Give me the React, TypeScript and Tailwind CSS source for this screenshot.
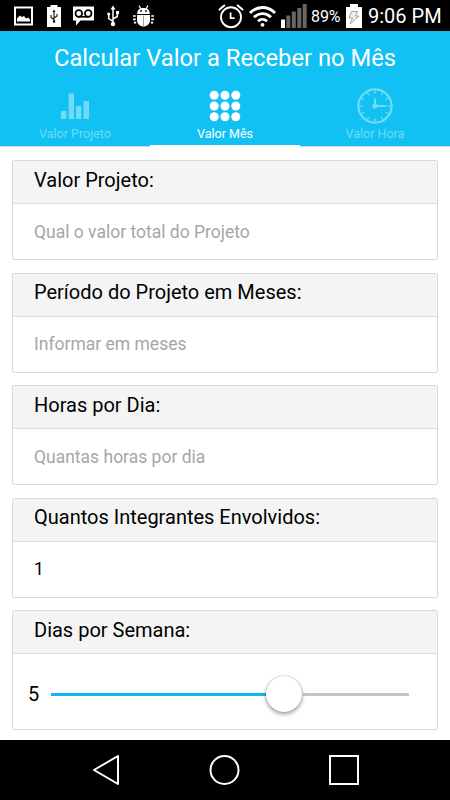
import { useState } from 'react';
import type { ReactNode } from 'react';

const FONT = "font-['Roboto','Noto_Sans',sans-serif]";

function StatusBar() {
  return (
    <div className="flex h-[31px] items-center bg-black pl-[14px] pr-[8px] text-white">
      <svg className="mr-[14px] h-[22px] w-[19px]" viewBox="0 0 19 22" fill="none">
        <rect x="1" y="2.5" width="17" height="17" stroke="#fff" strokeWidth="2" />
        <path d="M3 16.5v-3l3-3 2 1.5 2-1 2 2.5 2-1 2 2v2z" fill="#fff" />
      </svg>
      <svg className="mr-[12px] h-[22px] w-[14px]" viewBox="0 0 14 22" fill="none">
        <path d="M3.5 0h7v2H14v20H0V2h3.5z" fill="#fff" />
        <path d="M7 6v11M7 14.5L4 12.5V10M7 13l3-2V9" stroke="#111" strokeWidth="1.1" />
        <circle cx="7" cy="16.5" r="1.3" fill="#111" />
        <path d="M5.5 7L7 4.5 8.5 7z" fill="#111" />
      </svg>
      <svg className="mr-[13px] h-[22px] w-[21px]" viewBox="0 0 21 22" fill="none">
        <path d="M0 1.5h21v14H7.5L3 20.5v-5H0z" fill="#fff" />
        <circle cx="5.8" cy="8.5" r="3.3" stroke="#000" strokeWidth="1.8" />
        <circle cx="15.2" cy="8.5" r="3.3" stroke="#000" strokeWidth="1.8" />
        <path d="M5.8 11.8h9.4" stroke="#000" strokeWidth="1.6" />
      </svg>
      <svg className="mr-[14px] h-[22px] w-[12px]" viewBox="0 0 12 22" fill="none">
        <path d="M6 3v16M6 16.5L1.7 13.5V9.5M6 14l4.3-2.5V8" stroke="#fff" strokeWidth="1.5" />
        <path d="M3.5 4.5L6 .5l2.5 4z" fill="#fff" />
        <circle cx="1.7" cy="9" r="1.6" fill="#fff" />
        <rect x="9" y="6" width="3" height="3.2" fill="#fff" />
        <circle cx="6" cy="19" r="2.2" fill="#fff" />
      </svg>
      <svg className="h-[22px] w-[21px]" viewBox="0 0 21 22" fill="none">
        <path d="M4.2 9C4.200 5 6.500 3 10.500 3s6.300 2 6.300 6z" fill="#fff" />
        <path d="M6 .5l2 3.500M15 .5l-2 3.500" stroke="#fff" strokeWidth="1.300" />
        <circle cx="8" cy="6" r=".9" fill="#000" />
        <circle cx="13" cy="6" r=".9" fill="#000" />
        <path d="M4 10h13v5c0 4-3 6.500-6.500 6.500S4 19 4 15z" fill="#fff" />
        <path d="M10.500 10.500v11" stroke="#888" strokeWidth=".8" />
        <path d="M0 11h2.800M18.200 11H21M0 14.300h2.800M18.200 14.300H21M.8 17.600h2.400M17.800 17.600h2.400" stroke="#fff" strokeWidth="1.700" />
      </svg>

      <div className="ml-auto flex items-center">
        <svg className="mr-[5px] h-[26px] w-[26px]" viewBox="0 0 26 26" fill="none" stroke="#fff" strokeLinecap="round">
          <circle cx="13" cy="14.2" r="10" strokeWidth="1.9" />
          <path d="M1.5 6.5L6.3 2.5M24.5 6.5L19.7 2.5" strokeWidth="2" />
          <path d="M12.6 9.5v5.7h4" strokeWidth="1.7" strokeLinecap="butt" />
        </svg>
        <svg className="mr-[5px] h-[22px] w-[27px]" viewBox="0 0 27 22" fill="none" stroke="#fff" strokeWidth="2.8">
          <path d="M1 8C8 .7 19 .7 26 8" />
          <path d="M5 12.3C10 7.3 17 7.3 22 12.3" />
          <path d="M9 16.3C11.7 13.7 15.3 13.7 18 16.3" />
          <circle cx="13.5" cy="19.8" r="1.9" fill="#fff" stroke="none" />
        </svg>
        <svg className="mr-[4px] h-[24px] w-[26px]" viewBox="0 0 26 24" fill="#666">
          <rect x="0" y="15.5" width="4" height="8.5" fill="#fff" />
          <rect x="5.3" y="11.5" width="4" height="12.5" />
          <rect x="10.8" y="7.5" width="4" height="16.5" />
          <rect x="16.3" y="4" width="4" height="20" />
          <rect x="21.7" y="0" width="4" height="24" />
        </svg>
        <span className="w-[30px] whitespace-nowrap pt-[2px] text-[16px] leading-none tracking-[-0.1px]">89%</span>
        <svg className="ml-[5px] mr-[6px] h-[24px] w-[16px]" viewBox="0 0 16 24">
          <path d="M4 0h8v3h4v21H0V3h4z" fill="#fff" />
          <path d="M5.5 7.5h6L9.5 12H13l-9 8 2.5-6H3z" fill="#eee" stroke="#999" strokeWidth=".9" />
        </svg>
        <span className="w-[74px] whitespace-nowrap pt-px text-[20px] leading-none">9:06 PM</span>
      </div>
    </div>
  );
}

function BarsIcon() {
  return (
    <svg className="h-[36px] w-[36px]" viewBox="0 0 36 36" fill="currentColor">
      <rect x="4" y="23" width="5.3" height="8" />
      <rect x="11.7" y="5.5" width="5.3" height="25.5" />
      <rect x="19" y="18" width="5.3" height="13" />
      <rect x="26.5" y="13" width="5.5" height="18" />
    </svg>
  );
}

function GridIcon() {
  const steps = [7.2, 18, 28.8];
  return (
    <svg className="h-[36px] w-[36px]" viewBox="0 0 36 36" fill="currentColor">
      {steps.map((y) => steps.map((x) => <circle key={`${x}-${y}`} cx={x} cy={y} r="4.5" />))}
    </svg>
  );
}

function ClockIcon() {
  const ticks = Array.from({ length: 12 }, (_, i) => i * 30);
  return (
    <svg className="h-[36px] w-[36px]" viewBox="0 0 36 36" fill="none" stroke="currentColor">
      <circle cx="18" cy="18" r="16.6" strokeWidth="2.2" />
      {ticks.map((angle) => (
        <path key={angle} d="M18 2.5v3" strokeWidth="1.3" transform={`rotate(${angle} 18 18)`} />
      ))}
      <path d="M18 10.5V18h11.5" strokeWidth="2.2" />
      <circle cx="18" cy="18" r="2.6" fill="currentColor" stroke="none" />
    </svg>
  );
}

const tabs = [
  { id: 'projeto', label: 'Valor Projeto', icon: BarsIcon },
  { id: 'mes', label: 'Valor Mês', icon: GridIcon },
  { id: 'hora', label: 'Valor Hora', icon: ClockIcon },
];

function Header() {
  const [active, setActive] = useState('mes');

  return (
    <header className="h-[116px] bg-[#11c1f3] text-white">
      <h1 className="h-[57px] pt-[11px] text-center text-[23.75px] leading-[32px]">
        Calcular Valor a Receber no Mês
      </h1>
      <nav className="grid h-[59px] grid-cols-3">
        {tabs.map((tab) => (
          <button
            key={tab.id}
            onClick={() => setActive(tab.id)}
            className={`flex flex-col items-center ${
              tab.id === active
                ? 'border-b-2 border-white text-white'
                : 'border-b border-[#c3dce8] text-[#70daf8]'
            }`}
          >
            <tab.icon />
            <span className="pt-px text-[12.5px] leading-[18px]">{tab.label}</span>
          </button>
        ))}
      </nav>
    </header>
  );
}

interface CardProps {
  title: string;
  children: ReactNode;
}

function Card({ title, children }: CardProps) {
  return (
    <section className="rounded-[2px] border border-[#d9d9d9] bg-white">
      <h2 className="h-[43px] border-b border-[#dddddd] bg-[#f4f4f4] pl-[21px] pt-[5.4px] text-[20px] leading-[26px] text-black">
        {title}
      </h2>
      {children}
    </section>
  );
}

const fields = [
  { title: 'Valor Projeto:', placeholder: 'Qual o valor total do Projeto' },
  { title: 'Período do Projeto em Meses:', placeholder: 'Informar em meses' },
  { title: 'Horas por Dia:', placeholder: 'Quantas horas por dia' },
  { title: 'Quantos Integrantes Envolvidos:', value: '1' },
];

export default function App() {
  return (
    <div className={`flex h-[800px] w-[450px] flex-col overflow-hidden bg-white ${FONT}`}>
      <StatusBar />
      <Header />

      <main className="flex flex-1 flex-col gap-[12.5px] pl-[12px] pr-[12.5px] pt-[13.2px]">
        {fields.map((field) => (
          <Card key={field.title} title={field.title}>
            <input
              className="block h-[55px] w-full px-[21px] text-[17.5px] text-black outline-none placeholder:text-[#a6a6a6]"
              placeholder={field.placeholder}
              defaultValue={field.value}
            />
          </Card>
        ))}

        <Card title="Dias por Semana:">
          <div className="flex h-[75px] items-center pl-[15px] pr-[28px] pt-[5px]">
            <span className="w-[23px] text-[20px] leading-none text-black">5</span>
            <div className="flex flex-1 items-center">
              <div className="h-[3px] w-[215px] bg-[#11b5f3]" />
              <div className="size-[36px] shrink-0 rounded-full bg-white shadow-[0_2px_4px_rgba(0,0,0,0.4),0_0_1px_rgba(0,0,0,0.4)]" />
              <div className="h-[3px] flex-1 bg-[#c4c4c4]" />
            </div>
          </div>
        </Card>
      </main>

      <footer className="flex h-[60px] items-center bg-black pl-[92px]">
        <svg className="mr-[87px] size-[30px]" viewBox="0 0 30 30" fill="none" stroke="#fff" strokeWidth="2">
          <path d="M26 1v28L2 15z" strokeLinejoin="round" />
        </svg>
        <svg className="mr-[88px] size-[32px]" viewBox="0 0 32 32" fill="none" stroke="#fff" strokeWidth="2">
          <circle cx="15.5" cy="16" r="14" />
        </svg>
        <svg className="size-[30px]" viewBox="0 0 30 30" fill="none" stroke="#fff" strokeWidth="2">
          <rect x="1" y="1" width="28" height="28" />
        </svg>
      </footer>
    </div>
  );
}
